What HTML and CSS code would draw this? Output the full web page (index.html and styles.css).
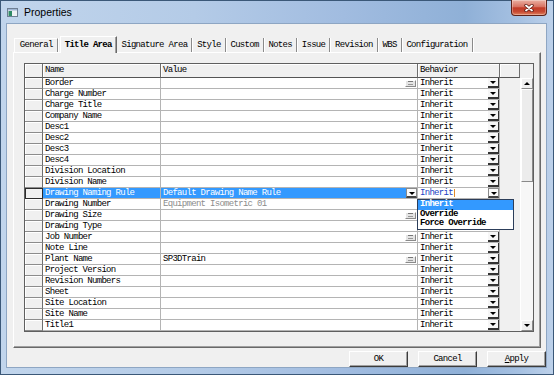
FILE: index.html
```html
<!DOCTYPE html>
<html lang="en">
<head>
    <meta charset="UTF-8">
    <title>Properties</title>
    <link rel="stylesheet" href="styles.css">
</head>
<body>
    <div class="window">
        <div class="titlebar">
            <svg class="app-icon" width="11" height="9" viewBox="0 0 11 9">
                <rect x="0.5" y="0.5" width="10" height="8" fill="#eef1f4" stroke="#6e7f93"/>
                <rect x="1" y="1" width="9" height="1.5" fill="#9fb6d4"/>
                <rect x="1.5" y="3" width="3.5" height="5" fill="#2f8a66"/>
            </svg>
            <span class="title">Properties</span>
            <div class="close-btn">
                <svg width="10" height="8" viewBox="0 0 10 8">
                    <path d="M2 1.5 L8 6.5 M8 1.5 L2 6.5" stroke="#5a1a12" stroke-width="3.4" stroke-linecap="round"/>
                    <path d="M2 1.5 L8 6.5 M8 1.5 L2 6.5" stroke="#fff" stroke-width="1.8" stroke-linecap="round"/>
                </svg>
            </div>
        </div>

        <div class="client">
            <ul class="tabs">
                <li class="tab first">General</li>
                <li class="tab active">Title Area</li>
                <li class="tab">Signature Area</li>
                <li class="tab">Style</li>
                <li class="tab">Custom</li>
                <li class="tab">Notes</li>
                <li class="tab">Issue</li>
                <li class="tab">Revision</li>
                <li class="tab">WBS</li>
                <li class="tab">Configuration</li>
            </ul>

            <div class="panel">
                <div class="grid">
                    <div class="grid-head">
                        <div class="hcell corner"></div>
                        <div class="hcell name">Name</div>
                        <div class="hcell value">Value</div>
                        <div class="hcell behavior">Behavior</div>
                        <div class="hcell extra"></div>
                    </div>
                    <div class="grid-body">
                        <div class="rows">
                            <div class="row"><div class="rh"></div><div class="c">Border</div><div class="c"><span class="ellipsis"></span></div><div class="c beh">Inherit<span class="dd"></span></div></div>
                            <div class="row"><div class="rh"></div><div class="c">Charge Number</div><div class="c"></div><div class="c beh">Inherit<span class="dd"></span></div></div>
                            <div class="row"><div class="rh"></div><div class="c">Charge Title</div><div class="c"></div><div class="c beh">Inherit<span class="dd"></span></div></div>
                            <div class="row"><div class="rh"></div><div class="c">Company Name</div><div class="c"></div><div class="c beh">Inherit<span class="dd"></span></div></div>
                            <div class="row"><div class="rh"></div><div class="c">Desc1</div><div class="c"></div><div class="c beh">Inherit<span class="dd"></span></div></div>
                            <div class="row"><div class="rh"></div><div class="c">Desc2</div><div class="c"></div><div class="c beh">Inherit<span class="dd"></span></div></div>
                            <div class="row"><div class="rh"></div><div class="c">Desc3</div><div class="c"></div><div class="c beh">Inherit<span class="dd"></span></div></div>
                            <div class="row"><div class="rh"></div><div class="c">Desc4</div><div class="c"></div><div class="c beh">Inherit<span class="dd"></span></div></div>
                            <div class="row"><div class="rh"></div><div class="c">Division Location</div><div class="c"></div><div class="c beh">Inherit<span class="dd"></span></div></div>
                            <div class="row"><div class="rh"></div><div class="c">Division Name</div><div class="c"></div><div class="c beh">Inherit<span class="dd"></span></div></div>
                            <div class="row selected">
                                <div class="rh"></div>
                                <div class="c">Drawing Naming Rule</div>
                                <div class="c">Default Drawing Name Rule<span class="dd boxed"></span></div>
                                <div class="c beh editing">
                                    <span class="edit-text">Inherit</span><span class="caret"></span><span class="dd boxed"></span>
                                    <ul class="dropdown">
                                        <li class="active">Inherit</li>
                                        <li>Override</li>
                                        <li>Force Override</li>
                                    </ul>
                                </div>
                            </div>
                            <!-- these three behavior cells sit under the open list -->
                            <div class="row"><div class="rh"></div><div class="c">Drawing Number</div><div class="c muted">Equipment Isometric 01</div><div class="c beh"></div></div>
                            <div class="row"><div class="rh"></div><div class="c">Drawing Size</div><div class="c"><span class="ellipsis"></span></div><div class="c beh"></div></div>
                            <div class="row"><div class="rh"></div><div class="c">Drawing Type</div><div class="c"></div><div class="c beh"></div></div>
                            <div class="row"><div class="rh"></div><div class="c">Job Number</div><div class="c"><span class="ellipsis"></span></div><div class="c beh">Inherit<span class="dd"></span></div></div>
                            <div class="row"><div class="rh"></div><div class="c">Note Line</div><div class="c"></div><div class="c beh">Inherit<span class="dd"></span></div></div>
                            <div class="row"><div class="rh"></div><div class="c">Plant Name</div><div class="c">SP3DTrain<span class="ellipsis"></span></div><div class="c beh">Inherit<span class="dd"></span></div></div>
                            <div class="row"><div class="rh"></div><div class="c">Project Version</div><div class="c"></div><div class="c beh">Inherit<span class="dd"></span></div></div>
                            <div class="row"><div class="rh"></div><div class="c">Revision Numbers</div><div class="c"></div><div class="c beh">Inherit<span class="dd"></span></div></div>
                            <div class="row"><div class="rh"></div><div class="c">Sheet</div><div class="c"></div><div class="c beh">Inherit<span class="dd"></span></div></div>
                            <div class="row"><div class="rh"></div><div class="c">Site Location</div><div class="c"></div><div class="c beh">Inherit<span class="dd"></span></div></div>
                            <div class="row"><div class="rh"></div><div class="c">Site Name</div><div class="c"></div><div class="c beh">Inherit<span class="dd"></span></div></div>
                            <div class="row"><div class="rh"></div><div class="c">Title1</div><div class="c"></div><div class="c beh">Inherit<span class="dd"></span></div></div>
                        </div>
                        <div class="gap"></div>
                        <div class="scrollbar">
                            <div class="sb-btn up"></div>
                            <div class="sb-thumb"></div>
                            <div class="sb-track"></div>
                            <div class="sb-btn down"></div>
                        </div>
                    </div>
                </div>
            </div>

            <div class="buttons">
                <div class="btn">OK</div>
                <div class="btn">Cancel</div>
                <div class="btn"><u>A</u>pply</div>
            </div>
        </div>
    </div>
</body>
</html>
```

FILE: styles.css
```css
* {
    box-sizing: border-box;
}

body {
    margin: 0;
    background-color: #fff;
    font-family: "Liberation Mono", monospace;
    font-size: 9px;
    letter-spacing: -0.7px;
    color: #000;
}

.window {
    width: 554px;
    height: 375px;
    border: 1px solid #3b5878;
    background: linear-gradient(90deg, #c1d5ec 0%, #b4cbe7 35%, #a1bce0 62%, #8fb0d7 84%, #a6c1e2 94%, #bdd1ea 100%);
    display: flex;
    flex-direction: column;
}

/* title bar */
.titlebar {
    height: 22px;
    display: flex;
    align-items: center;
    flex-shrink: 0;
}

.app-icon {
    margin-left: 6px;
    margin-top: 1px;
}

.title {
    margin-left: 6px;
    font-family: "Liberation Sans", Arial, sans-serif;
    font-size: 10.5px;
    letter-spacing: 0;
    color: #000;
}

.close-btn {
    margin-left: auto;
    margin-right: 6px;
    align-self: flex-start;
    margin-top: -1px;
    width: 36px;
    height: 16px;
    border: 1px solid #5e2219;
    border-top: none;
    border-radius: 0 0 4px 4px;
    background: linear-gradient(#eab0a2, #d87262 45%, #c23b28 52%, #c74a33 78%, #e0825f);
    box-shadow: inset 0 0 0 1px rgba(255, 255, 255, 0.3);
    display: flex;
    align-items: center;
    justify-content: center;
}

/* client area */
.client {
    margin: 0 6px 0 5px;
    width: 541px;
    height: 345px;
    flex-shrink: 0;
    background-color: #f0f0f0;
    border: 1px solid #8ea6c3;
}

.tabs {
    list-style: none;
    margin: 11px 0 0 7px;
    padding: 0;
    height: 17px;
    display: flex;
    align-items: flex-end;
    position: relative;
    z-index: 1;
}

.tab {
    height: 14px;
    line-height: 14px;
    padding: 0 4px 0 4.8px;
    border-right: 1px solid #8a8a8a;
    box-shadow: 1px 0 0 #fff;
    white-space: nowrap;
}

.tab.first {
    border-top: 1px solid #fff;
    border-left: 1px solid #fff;
    line-height: 13px;
}

.tab.active {
    height: 17px;
    line-height: 16px;
    margin: 0 0 -1px 2px;
    padding: 0 4px;
    background-color: #f0f0f0;
    border-top: 1px solid #fff;
    border-left: 1px solid #fff;
    border-right: 1px solid #696969;
    box-shadow: inset -1px 0 0 #a0a0a0;
    font-weight: bold;
}

.panel {
    margin-left: 6px;
    width: 528px;
    height: 296px;
    border: 1px solid;
    border-color: #fff #696969 #696969 #fff;
    box-shadow: inset -1px -1px 0 #a0a0a0;
    padding: 10px 0 0 10px;
}

/* property grid */
.grid {
    width: 510px;
    height: 269px;
    border: 1px solid #5f5f5f;
    background-color: #f0f0f0;
}

.grid-head {
    display: flex;
    height: 14px;
}

.hcell {
    height: 14px;
    line-height: 13px;
    padding-left: 2px;
    background-color: #f0f0f0;
    border-right: 1px solid #6e6e6e;
    border-bottom: 1px solid #555;
    box-shadow: inset 1px 1px 0 #fff;
}

.hcell.corner { width: 18px; }
.hcell.name { width: 118px; }
.hcell.value { width: 257px; }
.hcell.behavior { width: 82px; }
.hcell.extra { width: 20px; }

.grid-body {
    display: flex;
    height: 253px;
}

.rows {
    width: 475px;
}

.row {
    display: grid;
    grid-template-columns: 18px 118px 257px 82px;
    height: 11px;
}

.rh {
    background-color: #f0f0f0;
    border-right: 1px solid #6e6e6e;
    border-bottom: 1px solid #8c8c8c;
    box-shadow: inset 1px 1px 0 #fff;
}

.c {
    display: flex;
    align-items: center;
    padding-left: 2px;
    background-color: #fff;
    border-right: 1px solid #b4b4b4;
    border-bottom: 1px solid #b4b4b4;
    white-space: nowrap;
    overflow: hidden;
    line-height: 10px;
}

.c.muted {
    color: #8c8c8c;
}

.c.beh {
    overflow: visible;
    position: relative;
}

.selected .rh {
    border: 1px solid #2c2c2c;
    box-shadow: none;
}

.selected .c:nth-child(2),
.selected .c:nth-child(3) {
    background-color: #3399ff;
    color: #fff;
}

.edit-text {
    color: #1c3fc4;
}

.caret {
    width: 1px;
    height: 8px;
    margin-left: 1px;
    background-color: #e08a2c;
}

/* little in-cell buttons */
.dd {
    margin-left: auto;
    margin-right: 0;
    width: 11px;
    height: 10px;
    flex-shrink: 0;
    background-color: #f6f6f6;
    border-right: 1px solid #333;
    border-bottom: 2px solid #333;
    display: flex;
    align-items: center;
    justify-content: center;
}

.dd::after {
    content: "";
    border-left: 3px solid transparent;
    border-right: 3px solid transparent;
    border-top: 3px solid #000;
    margin-top: 1px;
}

.dd.boxed {
    height: 10px;
    border: 1px solid #8a8a8a;
    border-bottom: 2px solid #444;
    background-color: #fbfbfb;
}

.ellipsis {
    margin-left: auto;
    margin-right: 1px;
    width: 11px;
    height: 7px;
    flex-shrink: 0;
    background-color: #e4e4e4;
    border: 1px solid;
    border-color: #fff #8a8a8a #8a8a8a #fff;
    display: flex;
    align-items: center;
    justify-content: center;
}

.ellipsis::after {
    content: "";
    width: 5px;
    height: 2px;
    border-top: 1px solid #777;
    border-bottom: 1px solid #999;
}

.dropdown {
    position: absolute;
    top: 11px;
    left: -1px;
    width: 97px;
    margin: 0;
    padding: 0;
    list-style: none;
    background-color: #fff;
    border: 1px solid #2c3e5a;
    z-index: 2;
}

.dropdown li {
    height: 9.5px;
    line-height: 9.5px;
    padding-left: 2px;
    font-weight: bold;
    white-space: nowrap;
}

.dropdown li.active {
    background-color: #3399ff;
    color: #fff;
}

.gap {
    width: 20px;
}

/* scrollbar */
.scrollbar {
    width: 13px;
    display: flex;
    flex-direction: column;
    border-left: 1px solid #fff;
}

.sb-btn {
    height: 11px;
    background-color: #f0f0f0;
    border: 1px solid;
    border-color: #fff #8a8a8a #8a8a8a #fff;
    display: flex;
    align-items: center;
    justify-content: center;
}

.sb-btn.up::after {
    content: "";
    border-left: 3px solid transparent;
    border-right: 3px solid transparent;
    border-bottom: 3px solid #000;
}

.sb-btn.down::after {
    content: "";
    border-left: 3px solid transparent;
    border-right: 3px solid transparent;
    border-top: 3px solid #000;
}

.sb-thumb {
    height: 93px;
    background-color: #ececec;
    border: 1px solid;
    border-color: #fff #8a8a8a #8a8a8a #fff;
}

.sb-track {
    flex: 1;
    background-color: #f7f7f7;
}

/* dialog buttons */
.buttons {
    display: flex;
    justify-content: flex-end;
    gap: 10px;
    margin-top: 3px;
}

.btn {
    width: 59px;
    height: 16px;
    line-height: 14px;
    text-align: center;
    background-color: #f0f0f0;
    border: 1px solid;
    border-color: #fff #3c3c3c #3c3c3c #fff;
    box-shadow: inset -1px -1px 0 #a0a0a0;
}
```
